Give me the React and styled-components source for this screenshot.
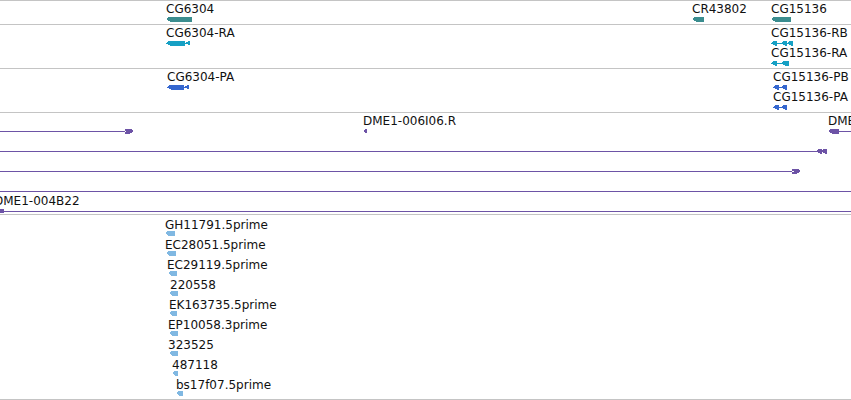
import styled, { createGlobalStyle } from 'styled-components';

const GlobalStyle = createGlobalStyle`
  html, body {
    margin: 0;
    padding: 0;
    background: #fff;
  }
  body {
    font-family: 'DejaVu Sans', sans-serif;
  }
`;

const colors = {
  grid: '#c4c4c4',
  gene: '#3b8d8f',
  mrna: '#16a0c4',
  cds: '#3567cf',
  match: '#6d53a6',
  est: '#80b8e2',
};

// glyph path helpers (glyph box is 6px high, centre at y=3)
const arrowL = (x, w, h = 4) =>
  w <= h + 1
    ? `M${x},3L${x + w},0.5L${x + w},5.5Z`
    : `M${x},3L${x + h},0.5L${x + w},0.5L${x + w},5.5L${x + h},5.5Z`;
const arrowR = (x, w, h = 4) =>
  w <= h + 1
    ? `M${x + w},3L${x},0.5L${x},5.5Z`
    : `M${x + w},3L${x + w - h},0.5L${x},0.5L${x},5.5L${x + w - h},5.5Z`;
const line = (x0, x1) => `M${x0},2.5H${x1}V3.5H${x0}Z`;
const box = (x, w) => `M${x},1H${x + w}V5H${x}Z`;
const transcript = (exons) =>
  line(exons[0][0], exons[exons.length - 1][1]) +
  exons.map(([a, b]) => arrowL(a, b - a)).join('');

const tracks = [
  {
    pad: 3,
    labelTop: 1,
    rows: [
      [
        { x: 166, label: 'CG6304', w: 26, d: arrowL(0, 26), color: colors.gene },
        { x: 692, label: 'CR43802', w: 12, d: arrowL(0, 12), color: colors.gene },
        { x: 771, label: 'CG15136', w: 20, d: arrowL(0, 20), color: colors.gene },
      ],
    ],
  },
  {
    pad: 3,
    labelTop: 1,
    rows: [
      [
        { x: 166, label: 'CG6304-RA', w: 24, d: transcript([[0, 19], [19, 24]]), color: colors.mrna },
        { x: 771, label: 'CG15136-RB', w: 22, d: transcript([[0, 6], [10, 16], [16, 22]]), color: colors.mrna },
      ],
      [{ x: 771, label: 'CG15136-RA', w: 18, d: transcript([[0, 6], [10, 18]]), color: colors.mrna }],
    ],
  },
  {
    pad: 3,
    labelTop: 1,
    rows: [
      [
        { x: 167, label: 'CG6304-PA', w: 22, d: transcript([[0, 17], [17, 22]]), color: colors.cds },
        { x: 773, label: 'CG15136-PB', w: 14, d: transcript([[0, 6], [8, 14]]), color: colors.cds },
      ],
      [{ x: 773, label: 'CG15136-PA', w: 14, d: transcript([[0, 6], [8, 14]]), color: colors.cds }],
    ],
  },
  {
    pad: 1,
    labelTop: 1,
    rows: [
      [
        { x: 0, w: 135, d: line(0, 126) + arrowR(125, 9), color: colors.match },
        { x: 363, label: 'DME1-006I06.R', w: 4, d: arrowL(0, 4), color: colors.match },
        { x: 828, label: 'DME1-013C07.R', w: 30, d: arrowL(0, 11) + line(10, 30), color: colors.match },
      ],
      [{ x: 0, w: 828, d: line(0, 817) + arrowL(816, 6) + arrowL(821, 6), color: colors.match }],
      [{ x: 0, w: 802, d: line(0, 794) + arrowR(792, 9), color: colors.match }],
      [{ x: 0, w: 851, d: line(0, 851), color: colors.match }],
      [{ x: -6, dx: 6, label: 'DME1-004B22', w: 851, d: box(0, 4) + line(0, 851), color: colors.match }],
    ],
  },
  {
    pad: 4,
    labelTop: 3,
    rows: [
      [{ x: 165, label: 'GH11791.5prime', w: 10, d: arrowL(0, 10, 3), color: colors.est }],
      [{ x: 165, dx: 1, label: 'EC28051.5prime', w: 10, d: arrowL(0, 10, 3), color: colors.est }],
      [{ x: 167, dx: 1, label: 'EC29119.5prime', w: 9, d: arrowL(0, 9, 3), color: colors.est }],
      [{ x: 170, dx: -1, label: '220558', w: 9, d: arrowL(0, 9, 3), color: colors.est }],
      [{ x: 169, dx: 0, label: 'EK163735.5prime', w: 8, d: arrowL(0, 8, 3), color: colors.est }],
      [{ x: 168, dx: 1, label: 'EP10058.3prime', w: 9, d: arrowL(0, 9, 3), color: colors.est }],
      [{ x: 168, dx: 1, label: '323525', w: 9, d: arrowL(0, 9, 3), color: colors.est }],
      [{ x: 172, dx: 0, label: '487118', w: 6, d: arrowL(0, 6, 3), color: colors.est }],
      [{ x: 176, dx: 0, label: 'bs17f07.5prime', w: 7, d: arrowL(0, 7, 3), color: colors.est }],
    ],
  },
];

const App = () => (
  <>
    <GlobalStyle />
    <Panel>
      {tracks.map((track, ti) => (
        <Track key={ti} $pad={track.pad}>
          {track.rows.map((row, ri) => (
            <Row key={ri}>
              {row.map((f, fi) => (
                <Feature key={fi} style={{ left: f.x }}>
                  <Label $top={track.labelTop}>{f.label || '\u00a0'}</Label>
                  <Glyph
                    $top={1 - track.labelTop}
                    width={f.w}
                    height={6}
                    viewBox={`0 0 ${f.w} 6`}
                    style={{ marginLeft: f.dx || 0 }}
                  >
                    <path d={f.d} fill={f.color} />
                  </Glyph>
                </Feature>
              ))}
            </Row>
          ))}
        </Track>
      ))}
    </Panel>
  </>
);

const Panel = styled.main`
  width: 851px;
  height: 400px;
  overflow: hidden;
  background: #fff;
  display: flex;
  flex-direction: column;
`;

const Track = styled.section`
  border-top: 1px solid ${colors.grid};
  padding-bottom: ${({ $pad }) => $pad}px;
  &:last-child {
    border-bottom: 1px solid ${colors.grid};
  }
`;

const Row = styled.div`
  position: relative;
  height: 20px;
`;

const Feature = styled.div`
  position: absolute;
  top: 0;
  display: flex;
  flex-direction: column;
  align-items: flex-start;
`;

const Label = styled.span`
  margin-top: ${({ $top }) => $top}px;
  font-family: 'DejaVu Sans', sans-serif;
  font-size: 12px;
  line-height: 14px;
  color: #111;
  white-space: nowrap;
`;

const Glyph = styled.svg`
  display: block;
  flex: none;
  margin-top: ${({ $top }) => $top}px;
  overflow: visible;
  shape-rendering: crispEdges;
`;

export default App;
